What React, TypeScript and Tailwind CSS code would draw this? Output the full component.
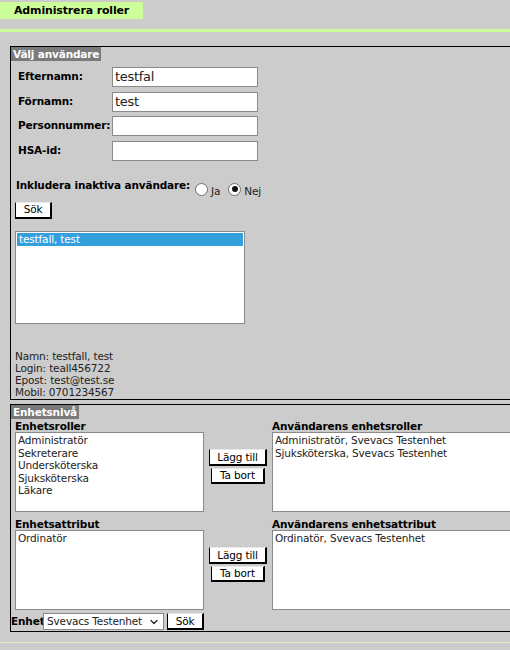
import { ChevronDown } from "lucide-react";

const ROLES = ["Administratör", "Sekreterare", "Undersköterska", "Sjuksköterska", "Läkare"];
const USER_ROLES = ["Administratör, Svevacs Testenhet", "Sjuksköterska, Svevacs Testenhet"];

const FIELDS = [
  { label: "Efternamn:", value: "testfal" },
  { label: "Förnamn:", value: "test" },
  { label: "Personnummer:", value: "" },
  { label: "HSA-id:", value: "" },
];

function Btn({ children, className = "" }: { children: React.ReactNode; className?: string }) {
  return (
    <div
      className={`flex items-center justify-center whitespace-nowrap bg-white border-t border-l border-t-[#e8e8e8] border-l-black border-r-2 border-b-2 border-r-black border-b-black leading-none ${className}`}
    >
      {children}
    </div>
  );
}

function Radio({ checked }: { checked?: boolean }) {
  return (
    <div className="w-[13px] h-[13px] rounded-full border border-[#707070] bg-white flex items-center justify-center">
      {checked && <div className="w-[6px] h-[6px] rounded-full bg-[#111]" />}
    </div>
  );
}

function Legend({ children }: { children: React.ReactNode }) {
  return (
    <div className="w-fit h-[14px] bg-[#7a7a7a] text-white font-bold px-[2px] leading-[14px] whitespace-nowrap">
      {children}
    </div>
  );
}

function ListBox({ items, w, h }: { items: string[]; w: string; h: string }) {
  return (
    <div className={`${w} ${h} bg-white border border-[#8a8a8a] px-[2px] pt-[1px] text-[#222] whitespace-nowrap`}>
      {items.map((it) => (
        <div key={it} className="leading-[12.5px]">{it}</div>
      ))}
    </div>
  );
}

function PairRow({
  left,
  right,
  leftItems,
  rightItems,
}: {
  left: string;
  right: string;
  leftItems: string[];
  rightItems: string[];
}) {
  return (
    <div className="flex">
      <div className="flex flex-col w-[189px]">
        <div className="h-[12px] leading-[12px] font-bold whitespace-nowrap">{left}</div>
        <ListBox items={leftItems} w="w-[189px]" h="h-[80px]" />
      </div>
      <div className="w-[68px] flex flex-col items-center gap-[2px] pt-[29px]">
        <Btn className="w-[58px] h-[17px]">Lägg till</Btn>
        <Btn className="w-[54px] h-[16px]">Ta bort</Btn>
      </div>
      <div className="flex flex-col w-[245px]">
        <div className="h-[12px] leading-[12px] font-bold whitespace-nowrap">{right}</div>
        <ListBox items={rightItems} w="w-[245px]" h="h-[80px]" />
      </div>
    </div>
  );
}

export default function App() {
  return (
    <div className="w-[510px] h-[650px] overflow-hidden bg-[#cccccc] text-[10.5px] tracking-[-0.15px] text-black font-['DejaVu_Sans',Verdana,sans-serif]">
      <div className="pt-[2px]">
        <div className="w-[143px] h-[17px] bg-[#ccff99] pl-[14px] font-bold leading-[17px] text-[11px] whitespace-nowrap">
          Administrera roller
        </div>
      </div>
      <div className="mt-[10px] h-[3px] bg-[#ccff99]" />

      {/* Välj användare */}
      <div className="ml-[10px] mt-[14px] w-[510px] h-[354px] border border-black">
        <Legend>Välj användare</Legend>
        <div className="pl-[4px]">
          <div className="mt-[6px] flex flex-col gap-[4.5px] pl-[3px]">
            {FIELDS.map((f) => (
              <div key={f.label} className="flex items-center h-[20px]">
                <div className="w-[94px] font-bold whitespace-nowrap">{f.label}</div>
                <div className="w-[146px] h-[20px] bg-white border border-[#8a8a8a] pl-[2px] text-[13px] tracking-[-0.3px] leading-[18px] text-[#222]">
                  {f.value}
                </div>
              </div>
            ))}
          </div>

          <div className="mt-[18px] h-[18px] flex items-start pl-[1px]">
            <div className="font-bold leading-[13px] whitespace-nowrap">Inkludera inaktiva användare:</div>
            <div className="ml-[5px] mt-[1px] flex items-center">
              <Radio />
              <span className="ml-[3px] mt-[4px] text-[#222]">Ja</span>
              <div className="ml-[8px]"><Radio checked /></div>
              <span className="ml-[3px] mt-[4px] text-[#222]">Nej</span>
            </div>
          </div>

          <Btn className="mt-[5px] w-[37px] h-[17px]">Sök</Btn>

          <div className="mt-[12px] w-[230px] h-[93px] bg-white border border-[#8a8a8a] p-px">
            <div className="h-[13px] leading-[13px] bg-[#33a0dd] text-white pl-[2px]">testfall, test</div>
          </div>

          <div className="mt-[26px] leading-[12px] text-[#222]">
            <div>Namn: testfall, test</div>
            <div>Login: teall456722</div>
            <div>Epost: test@test.se</div>
            <div>Mobil: 0701234567</div>
          </div>
        </div>
      </div>

      {/* Enhetsnivå */}
      <div className="ml-[10px] mt-[4px] w-[510px] h-[228px] border border-black">
        <Legend>Enhetsnivå</Legend>
        <div className="pl-[4px] pt-[1px]">
          <PairRow
            left="Enhetsroller"
            right="Användarens enhetsroller"
            leftItems={ROLES}
            rightItems={USER_ROLES}
          />
          <div className="mt-[6px]">
            <PairRow
              left="Enhetsattribut"
              right="Användarens enhetsattribut"
              leftItems={["Ordinatör"]}
              rightItems={["Ordinatör, Svevacs Testenhet"]}
            />
          </div>
        </div>
        <div className="mt-[3px] flex items-center">
          <span className="font-bold w-[32px] whitespace-nowrap">Enhet</span>
          <div className="w-[121px] h-[17px] bg-white border border-[#8a8a8a] flex items-center justify-between pl-[3px] pr-[3px] text-[#222] whitespace-nowrap">
            <span>Svevacs Testenhet</span>
            <ChevronDown className="w-[12px] h-[12px]" strokeWidth={2.5} />
          </div>
          <Btn className="ml-[3px] w-[37px] h-[17px]">Sök</Btn>
        </div>
      </div>
      <div className="mt-[10px] h-px bg-[#e2ecc4]" />
    </div>
  );
}
